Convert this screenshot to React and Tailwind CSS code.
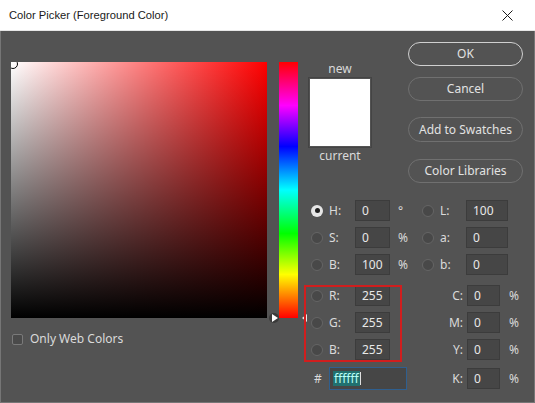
import React from "react";

function Radio({ on }) {
  return on ? (
    <div className="w-[12px] h-[12px] rounded-full bg-[#e6e6e6] flex items-center justify-center shrink-0">
      <div className="w-[5px] h-[5px] rounded-full bg-[#1f1f1f]" />
    </div>
  ) : (
    <div className="w-[12px] h-[12px] rounded-full border border-[#656565] bg-[#484848] shrink-0" />
  );
}

function Field({ value, w }) {
  return (
    <div className={`${w} h-[21px] bg-[#464646] border border-[#3c3c3c] pl-[6px] flex items-center text-[12px] text-[#e8e8e8]`}>
      {value}
    </div>
  );
}

function LeftHalf({ on, label, value, unit }) {
  return (
    <div className="flex items-center w-[114px]">
      <div className="ml-[7px]"><Radio on={on} /></div>
      <span className="ml-[6px] w-[26px] text-[12px]">{label}</span>
      <Field value={value} w="w-[35px]" />
      <span className="pl-[8px] w-[28px] text-[12px]">{unit}</span>
    </div>
  );
}

function LabHalf({ label, value }) {
  return (
    <div className="flex items-center">
      <div className="ml-[4px]"><Radio /></div>
      <span className="ml-[6px] w-[26px] text-[12px]">{label}</span>
      <Field value={value} w="w-[42px]" />
    </div>
  );
}

function CmykHalf({ label }) {
  return (
    <div className="flex items-center">
      <span className="w-[45px] text-right text-[12px]">{label}</span>
      <div className="ml-[4px]"><Field value="0" w="w-[33px]" /></div>
      <span className="ml-[9px] text-[12px]">%</span>
    </div>
  );
}

export default function App() {
  const btn = "h-[24px] rounded-full border flex items-center justify-center text-[12px] text-[#e2e2e2]";
  return (
    <div className="relative w-[535px] h-[403px] flex flex-col font-['Noto_Sans',sans-serif] overflow-hidden">
      {/* title bar */}
      <div className="h-[31px] bg-white flex items-center justify-between pl-[9px] border-b border-[#e6e6e6]">
        <span className="text-[11.2px] text-[#1a1a1a] font-['Liberation_Sans',sans-serif]">Color Picker (Foreground Color)</span>
        <svg width="11" height="11" viewBox="0 0 11 11" className="mr-[22px]">
          <path d="M0.5 0.5L10.5 10.5M10.5 0.5L0.5 10.5" stroke="#1a1a1a" strokeWidth="1" />
        </svg>
      </div>

      {/* body */}
      <div className="flex-1 bg-[#535353] border-l border-r border-b border-[#767676] flex pl-[10px] pt-[11px] text-[#dadada]">
        {/* left: field + hue */}
        <div className="flex flex-col mt-[20px]">
          <div className="flex">
            <div className="relative w-[256px] h-[256px] overflow-hidden bg-[linear-gradient(to_bottom,rgba(0,0,0,0),#000),linear-gradient(to_right,#fff,#f00)]">
              <div className="absolute -left-[3px] -top-[3px] w-[10px] h-[10px] rounded-full border-[1.5px] border-black" />
            </div>
            <div className="relative ml-[12px] w-[19px] h-[256px] bg-[linear-gradient(to_bottom,#f00,#f0f_17%,#00f_33%,#0ff_50%,#0f0_67%,#ff0_83%,#f00)]">
              <div className="absolute -left-[10px] top-[251px] w-[10px] h-[10px] rounded-full bg-[#3a3a3a] flex items-center justify-center">
                <div className="w-0 h-0 border-y-[4px] border-y-transparent border-l-[6px] border-l-white ml-[1px]" />
              </div>
              <div className="absolute left-[23px] top-[252px] w-0 h-0 border-y-[4px] border-y-transparent border-r-[5px] border-r-[#e8e8e8]" />
            </div>
          </div>
          <div className="flex items-center mt-[12px] ml-[1px]">
            <div className="w-[11px] h-[11px] border border-[#7a7a7a] bg-[#4a4a4a] rounded-[2px]" />
            <span className="ml-[7px] text-[12px]">Only Web Colors</span>
          </div>
        </div>

        {/* right */}
        <div className="ml-[6px] w-[229px] flex flex-col">
          <div className="flex">
            <div className="w-[104px] pl-[6px]">
              <div className="w-[60px] flex flex-col items-center">
                <span className="mt-[20px] leading-[14px] text-[12px]">new</span>
                <div className="mt-[3px] w-[60px] h-[67px] bg-white outline outline-1 outline-offset-1 outline-[#444]" />
                <span className="mt-[3px] leading-[14px] text-[12px]">current</span>
              </div>
            </div>
            <div className="w-[115px] flex flex-col">
              <div className={`${btn} border-[1.5px] border-[#d0d0d0]`}>OK</div>
              <div className={`${btn} mt-[11px] border-[#707070]`}>Cancel</div>
              <div className={`${btn} mt-[16px] h-[25px] border-[#707070]`}>Add to Swatches</div>
              <div className={`${btn} mt-[17px] border-[#707070]`}>Color Libraries</div>
            </div>
          </div>

          <div className="mt-[17px] flex flex-col gap-[6px]">
            <div className="flex items-center h-[21px]">
              <LeftHalf on label="H:" value="0" unit="°" />
              <LabHalf label="L:" value="100" />
            </div>
            <div className="flex items-center h-[21px]">
              <LeftHalf label="S:" value="0" unit="%" />
              <LabHalf label="a:" value="0" />
            </div>
            <div className="flex items-center h-[21px]">
              <LeftHalf label="B:" value="100" unit="%" />
              <LabHalf label="b:" value="0" />
            </div>
            <div className="flex items-center h-[21px] mt-[4px]">
              <LeftHalf label="R:" value="255" />
              <CmykHalf label="C:" />
            </div>
            <div className="flex items-center h-[21px]">
              <LeftHalf label="G:" value="255" />
              <CmykHalf label="M:" />
            </div>
            <div className="flex items-center h-[21px]">
              <LeftHalf label="B:" value="255" />
              <CmykHalf label="Y:" />
            </div>
            <div className="flex items-center h-[23px] mt-[1px]">
              <div className="flex items-center w-[114px]">
                <span className="ml-[10px] w-[15px] text-[12px]">#</span>
                <div className="w-[78px] h-[23px] bg-[#464646] border border-[#2f5f8f] pl-[3px] flex items-center text-[12px]">
                  <span className="bg-[#21706f] text-[#b8fff8] leading-[15px] px-[1px]">ffffff</span>
                  <span className="w-[1px] h-[13px] bg-[#e0e0e0]" />
                </div>
              </div>
              <CmykHalf label="K:" />
            </div>
          </div>
        </div>
      </div>

      {/* red highlight around RGB */}
      <div className="absolute left-[304px] top-[285px] w-[98px] h-[77px] border-2 border-[#d01e1e]" />
    </div>
  );
}
